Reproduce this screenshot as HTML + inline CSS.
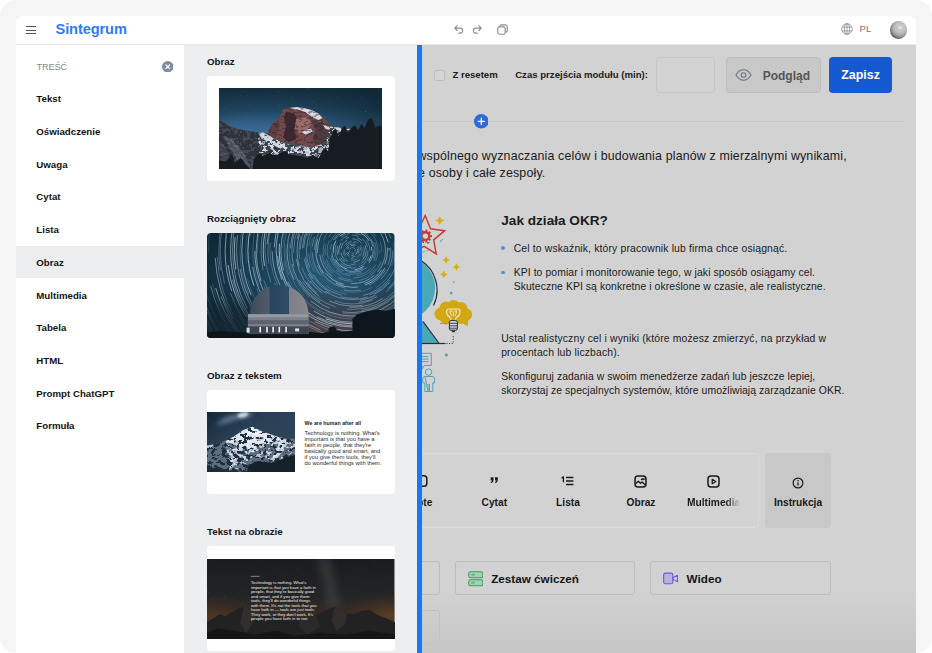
<!DOCTYPE html>
<html lang="pl">
<head>
<meta charset="utf-8">
<title>Sintegrum</title>
<style>
*{box-sizing:border-box;margin:0;padding:0}
html,body{width:932px;height:653px;overflow:hidden;background:#fff}
body{font-family:"Liberation Sans",sans-serif;color:#111;position:relative}
.outer{position:absolute;left:0;top:0;width:932px;height:653px;background:#f5f5f5;border-radius:16px}
.app{position:absolute;left:16px;top:16px;width:900px;height:637px;background:#fff;border-radius:7px 7px 0 0;overflow:hidden}
.abs{position:absolute}
/* header */
.hdr{position:absolute;left:0;top:0;width:900px;height:29px;background:#fff;border-bottom:1px solid #e6e8ec}
.logo{position:absolute;left:39.5px;top:3.5px;font-size:14.6px;font-weight:700;color:#2f7af5;letter-spacing:-0.1px;line-height:18px;white-space:nowrap}
.burger{position:absolute;left:10px;top:10px;width:10px}
.burger i{display:block;height:1px;background:#555;margin-bottom:2.6px}
.pl{position:absolute;left:843.5px;top:6.6px;font-size:9.6px;color:#777;line-height:12px}
.avatar{position:absolute;left:873.5px;top:5px;width:17.5px;height:17.5px;border-radius:50%;background:radial-gradient(circle 12.2px at 60% 37%,#f2f2f2 0,#cdcdcd 16%,#bdbdbd 45%,#a0a0a0 68%,#6a6a6a 88%,#3c3c3c 100%)}
/* sidebar */
.side{position:absolute;left:0;top:29px;width:168px;height:608px;background:#fff}
.side .ttl{position:absolute;left:20.5px;top:15.5px;font-size:9.3px;color:#8b8b8b;line-height:12px;letter-spacing:-0.2px}
.side .cls{position:absolute;left:145.5px;top:15.5px;width:11.5px;height:11.5px}
.mi{position:absolute;left:0;width:168px;height:32.7px;line-height:34.5px;padding-left:20.3px;font-size:9.7px;font-weight:700;color:#141414;white-space:nowrap}
.mi.sel{background:#ecedef}
/* middle */
.mid{position:absolute;left:168px;top:29px;width:233px;height:608px;background:#edeef0}
.mid h4{position:absolute;left:23px;font-size:9.75px;font-weight:700;color:#141414;line-height:12px;white-space:nowrap}
.card{position:absolute;left:23px;width:187.5px;background:#fff;border-radius:4px;overflow:hidden}
.bar{position:absolute;z-index:3;left:401px;top:29px;width:4.7px;height:608px;background:#1578f7}
/* right */
.right{position:absolute;left:405px;top:29px;width:495px;height:608px;background:#d2d2d2;overflow:hidden}

.right .t{position:absolute;white-space:nowrap;color:#1b1b1b}
.cb{position:absolute;left:13px;top:24.5px;width:11.3px;height:11.3px;border:1px solid #bcbcbc;border-radius:2.5px;background:#d6d6d6}
.lbl{font-size:9.6px;font-weight:700;line-height:12px}
.inp{position:absolute;left:235.3px;top:12.2px;width:58.4px;height:35.6px;border:1px solid #c6c6c6;border-radius:4px;background:#d3d3d3}
.btn1{position:absolute;left:305.2px;top:12.2px;width:94.6px;height:35.6px;border:1px solid #bdbdbd;border-radius:4px;background:#c8c8c8}
.btn1 span{position:absolute;left:35.5px;top:10.9px;font-size:12px;font-weight:700;color:#555;line-height:15px}
.btn2{position:absolute;left:407.9px;top:11.8px;width:63.4px;height:36px;border-radius:4px;background:#1559d0}
.btn2 span{position:absolute;left:0;width:100%;text-align:center;top:11.6px;font-size:12.4px;font-weight:700;color:#fff;line-height:15px}
.dots{position:absolute;left:0;top:76px;width:483px;height:0;border-top:1px dotted #bfbfbf}
.plus{position:absolute;left:52.6px;top:69.2px;width:14.6px;height:14.6px}
.p12{font-size:12.4px;line-height:16.5px;color:#222;letter-spacing:.16px}
.h13{font-size:13.6px;font-weight:700;line-height:16px;color:#111}
.p10{font-size:10.4px;line-height:13.9px;color:#222;letter-spacing:.15px}
.dot{position:absolute;margin:-.2px;width:3.8px;height:3.8px;border-radius:50%;background:#5a8fd8}
.tb{position:absolute;left:-20px;top:408px;width:357.6px;height:74.6px;border:1px solid #dbdbdb;border-radius:4px}
.tb2{position:absolute;left:344.3px;top:408.3px;width:66px;height:74.3px;border-radius:4px;background:#c8c8c8}
.tl{position:absolute;font-size:10.2px;font-weight:700;line-height:12px;color:#1a1a1a;white-space:nowrap;transform:translateX(-50%)}
.bb{position:absolute;height:34.4px;width:180.6px;border:1px solid #bdbdbd;border-radius:3px}
.bb span{position:absolute;top:9.300px;font-size:11.7px;font-weight:700;line-height:15px;color:#151515;white-space:nowrap}
.fade{position:absolute;left:0;top:545px;width:495px;height:63px;background:linear-gradient(to bottom,rgba(197,197,197,0),rgba(197,197,197,.55) 55%,rgba(197,197,197,.95))}
</style>
</head>
<body>
<div class="outer"></div>
<div class="app">
  <div class="hdr">
    <div class="burger"><i></i><i></i><i></i></div>
    <div class="logo">Sintegrum</div>

    <svg class="abs" style="left:438.300px;top:9.300px" width="10" height="9" viewBox="0 0 10 9"><path d="M3.200 0.700L0.700 3.100l2.500 2.400M0.900 3.100h5.300a2.500 2.500 0 0 1 0 5H4.700" fill="none" stroke="#8e8e8e" stroke-width="1.150" stroke-linecap="round" stroke-linejoin="round"/></svg>
    <svg class="abs" style="left:455.500px;top:9.300px" width="10" height="9" viewBox="0 0 10 9"><path d="M6.800 0.700L9.300 3.100 6.800 5.500M9.100 3.100H3.800a2.500 2.500 0 0 0 0 5h1.500" fill="none" stroke="#8e8e8e" stroke-width="1.150" stroke-linecap="round" stroke-linejoin="round"/></svg>
    <svg class="abs" style="left:480.500px;top:8.300px" width="11" height="11" viewBox="0 0 11 11"><path d="M2.800 3.300V2.500A1.700 1.700 0 0 1 4.500 0.800h4A1.700 1.700 0 0 1 10.200 2.500v4A1.700 1.700 0 0 1 8.500 8.200H7.700" fill="none" stroke="#8e8e8e" stroke-width="1.150"/><rect x="0.800" y="2.800" width="7.400" height="7.400" rx="1.700" fill="#fff" stroke="#8e8e8e" stroke-width="1.150"/></svg>
    <svg class="abs" style="left:824.500px;top:7.200px" width="12" height="12" viewBox="0 0 12 12"><g fill="none" stroke="#929292" stroke-width="0.850"><circle cx="6" cy="6" r="5.300"/><ellipse cx="6" cy="6" rx="2.700" ry="5.300"/><path d="M6 0.700v10.600M1.200 4.100h9.600M1.200 7.900h9.600"/></g></svg>
    <div class="pl">PL</div>
    <div class="avatar"></div>
  </div>
  <div class="side">
    <div class="ttl">TREŚĆ</div>
    <svg class="cls" viewBox="0 0 12 12"><circle cx="6" cy="6" r="6" fill="#7d8ca3"/><path d="M4 4l4 4M8 4l-4 4" stroke="#fff" stroke-width="1.3" stroke-linecap="round"/></svg>
    <div class="mi" style="top:37.3px">Tekst</div>
    <div class="mi" style="top:70px">Oświadczenie</div>
    <div class="mi" style="top:102.7px">Uwaga</div>
    <div class="mi" style="top:135.4px">Cytat</div>
    <div class="mi" style="top:168.1px">Lista</div>
    <div class="mi sel" style="top:200.8px">Obraz</div>
    <div class="mi" style="top:233.5px">Multimedia</div>
    <div class="mi" style="top:266.2px">Tabela</div>
    <div class="mi" style="top:298.9px">HTML</div>
    <div class="mi" style="top:331.6px">Prompt ChatGPT</div>
    <div class="mi" style="top:364.3px">Formuła</div>
  </div>
  <div class="mid">
    <h4 style="top:10.5px">Obraz</h4>
    <div class="card" id="c1" style="top:31.2px;height:104.5px"><svg class="abs" style="left:12.2px;top:12px" width="163" height="80.500" viewBox="0 0 163 80.500" preserveAspectRatio="none"><defs><linearGradient id="s1" x1="0" y1="0" x2="0" y2="1"><stop offset="0" stop-color="#1a3546"/><stop offset=".28" stop-color="#224c68"/><stop offset=".52" stop-color="#3a6894"/><stop offset="1" stop-color="#4577a8"/></linearGradient><radialGradient id="v1" cx=".28" cy=".62" r=".85"><stop offset=".3" stop-color="#0d2230" stop-opacity="0"/><stop offset="1" stop-color="#0d2230" stop-opacity=".72"/></radialGradient><filter id="b1" x="-5%" y="-5%" width="110%" height="110%"><feGaussianBlur stdDeviation=".45"/></filter><filter id="rk1" x="0" y="0" width="100%" height="100%" color-interpolation-filters="sRGB"><feTurbulence type="fractalNoise" baseFrequency=".22 .3" numOctaves="3" seed="4" result="n"/><feColorMatrix in="n" type="matrix" values="0 0 0 0 .16  0 0 0 0 .18  0 0 0 0 .22  -22 0 0 0 10.500" result="rk"/><feComposite in="rk" in2="SourceGraphic" operator="in"/></filter><filter id="sn1" x="0" y="0" width="100%" height="100%" color-interpolation-filters="sRGB"><feTurbulence type="fractalNoise" baseFrequency=".25 .32" numOctaves="3" seed="9" result="n"/><feColorMatrix in="n" type="matrix" values="0 0 0 0 .84  0 0 0 0 .86  0 0 0 0 .9  22 0 0 0 -11.400" result="rk"/><feComposite in="rk" in2="SourceGraphic" operator="in"/></filter><filter id="dm1" x="0" y="0" width="100%" height="100%" color-interpolation-filters="sRGB"><feTurbulence type="fractalNoise" baseFrequency=".2 .5" numOctaves="3" seed="2" result="n"/><feColorMatrix in="n" type="matrix" values="0 0 0 0 .2  0 0 0 0 .14  0 0 0 0 .16  -14 0 0 0 6.600" result="rk"/><feComposite in="rk" in2="SourceGraphic" operator="in"/></filter></defs><rect width="163" height="80.500" fill="url(#s1)"/><rect width="163" height="80.500" fill="url(#v1)"/><circle cx="52.8" cy="4.5" r="0.28" fill="#cfe0ee" opacity="0.34"/><circle cx="87.3" cy="11.0" r="0.16" fill="#cfe0ee" opacity="0.55"/><circle cx="6.1" cy="13.0" r="0.16" fill="#cfe0ee" opacity="0.35"/><circle cx="69.2" cy="24.8" r="0.17" fill="#cfe0ee" opacity="0.41"/><circle cx="102.3" cy="28.4" r="0.27" fill="#cfe0ee" opacity="0.50"/><circle cx="159.1" cy="1.4" r="0.32" fill="#cfe0ee" opacity="0.44"/><circle cx="23.5" cy="3.5" r="0.21" fill="#cfe0ee" opacity="0.71"/><circle cx="29.5" cy="17.4" r="0.28" fill="#cfe0ee" opacity="0.49"/><circle cx="89.3" cy="1.9" r="0.16" fill="#cfe0ee" opacity="0.40"/><circle cx="110.9" cy="12.8" r="0.21" fill="#cfe0ee" opacity="0.59"/><circle cx="73.9" cy="9.0" r="0.31" fill="#cfe0ee" opacity="0.65"/><circle cx="39.8" cy="17.2" r="0.26" fill="#cfe0ee" opacity="0.74"/><circle cx="118.9" cy="8.6" r="0.35" fill="#cfe0ee" opacity="0.36"/><circle cx="68.2" cy="22.7" r="0.18" fill="#cfe0ee" opacity="0.54"/><circle cx="6.4" cy="20.0" r="0.30" fill="#cfe0ee" opacity="0.59"/><circle cx="142.7" cy="9.4" r="0.29" fill="#cfe0ee" opacity="0.60"/><circle cx="94.5" cy="13.7" r="0.32" fill="#cfe0ee" opacity="0.77"/><circle cx="77.3" cy="19.9" r="0.16" fill="#cfe0ee" opacity="0.65"/><circle cx="105.5" cy="29.8" r="0.31" fill="#cfe0ee" opacity="0.44"/><circle cx="62.9" cy="20.1" r="0.15" fill="#cfe0ee" opacity="0.53"/><circle cx="27.4" cy="3.5" r="0.16" fill="#cfe0ee" opacity="0.68"/><circle cx="21.1" cy="7.4" r="0.23" fill="#cfe0ee" opacity="0.74"/><circle cx="13.1" cy="13.5" r="0.26" fill="#cfe0ee" opacity="0.74"/><circle cx="133.5" cy="25.9" r="0.21" fill="#cfe0ee" opacity="0.51"/><circle cx="58.5" cy="26.5" r="0.34" fill="#cfe0ee" opacity="0.38"/><circle cx="28.7" cy="7.0" r="0.20" fill="#cfe0ee" opacity="0.54"/><circle cx="96.0" cy="7.9" r="0.15" fill="#cfe0ee" opacity="0.51"/><circle cx="60.2" cy="17.0" r="0.34" fill="#cfe0ee" opacity="0.65"/><circle cx="84.0" cy="18.5" r="0.29" fill="#cfe0ee" opacity="0.33"/><circle cx="146.6" cy="23.4" r="0.32" fill="#cfe0ee" opacity="0.70"/><circle cx="64.0" cy="12.0" r="0.17" fill="#cfe0ee" opacity="0.62"/><circle cx="10.1" cy="2.0" r="0.19" fill="#cfe0ee" opacity="0.38"/><circle cx="55.4" cy="1.6" r="0.15" fill="#cfe0ee" opacity="0.38"/><circle cx="16.5" cy="10.9" r="0.16" fill="#cfe0ee" opacity="0.74"/><circle cx="100.1" cy="4.5" r="0.20" fill="#cfe0ee" opacity="0.47"/><circle cx="59.4" cy="3.7" r="0.32" fill="#cfe0ee" opacity="0.80"/><circle cx="76.0" cy="14.5" r="0.17" fill="#cfe0ee" opacity="0.35"/><circle cx="55.8" cy="7.9" r="0.32" fill="#cfe0ee" opacity="0.38"/><circle cx="3.8" cy="28.5" r="0.26" fill="#cfe0ee" opacity="0.37"/><circle cx="88.5" cy="0.8" r="0.26" fill="#cfe0ee" opacity="0.79"/><g filter="url(#b1)"><polygon points="37.5,44.3 48.5,45.4 111.3,36.9 125.1,39.9 136.2,40.2 166.6,42.1 166.6,84.5 32.8,84.5" fill="#474d58"/><polygon points="48.2,45.8 51.3,39.3 55.0,33.8 59.6,31.4 63.3,21.8 69.8,19.9 77.1,19.0 84.5,19.9 91.9,21.8 99.3,25.5 104.8,30.1 111.8,36.9 108.5,51.3 99.3,59.6 84.5,57.8 69.8,55.0 56.8,51.3" fill="#70494d"/><polygon points="67.0,23.6 75.3,25.5 78.1,32.8 75.3,42.1 77.1,51.3 69.8,54.6 64.2,49.5 67.0,38.4 65.1,29.2" fill="#3a2c33"/><polygon points="48.2,45.8 51.3,39.3 55.0,33.8 59.6,31.4 60.9,38.4 57.8,45.8 56.8,51.3" fill="#5e4146"/><polygon points="91.9,32.8 106.7,35.6 111.8,36.9 108.5,51.3 99.3,59.6 93.7,51.3 96.5,42.1" fill="#4f3a41"/><polygon points="77.1,31.0 88.2,29.2 92.8,35.6 88.2,42.1 79.9,45.4 75.7,40.2" fill="#9c6a69"/><polygon points="69.8,19.9 77.1,19.0 84.5,19.9 91.9,21.8 99.3,25.5 103.9,30.6 99.3,31.9 92.8,28.8 86.4,24.0 79.0,21.8" fill="#d5dae2"/><polygon points="38.0,45.0 44.3,44.5 49.8,47.6 56.8,51.7 66.1,55.7 74.4,58.7 73.1,62.7 60.5,60.2 51.3,55.4 44.3,50.9 40.2,48.0" fill="#cfd5de"/><polygon points="103.9,36.9 114.0,39.1 124.2,40.2 123.3,44.3 114.0,42.8 106.7,41.0" fill="#cfd5de"/><polygon points="82.7,43.9 91.9,40.2 93.7,43.6 86.4,46.7" fill="#cfd5de"/><polygon points="75.3,59.6 82.7,56.8 91.9,59.6 99.3,64.2 106.7,56.8 110.4,51.3 112.2,58.7 106.7,69.8 99.3,73.4 88.2,66.1 79.0,65.1" fill="#6f7683"/><polygon points="51.3,59.6 58.7,63.3 69.8,66.1 75.3,69.8 66.1,71.6 55.0,67.0" fill="#8e95a2"/><polygon points="42.1,51.3 51.3,57.8 62.4,62.4 73.4,64.6 75.3,69.8 62.4,68.8 51.3,64.2 43.0,58.7" fill="#3d434e"/><polygon points="51.3,59.6 56.8,60.9 60.5,67.0 55.4,65.7" fill="#c4cad4"/><polygon points="99.3,60.5 106.7,56.8 109.4,59.6 104.8,69.8 100.2,71.6" fill="#aab1bd"/><polygon points="73.4,59.6 82.7,58.3 91.9,60.5 99.3,64.6 91.9,68.3 82.7,66.1 75.3,64.6" fill="#b4bac6"/><polygon points="42.1,51.3 48.5,54.6 46.7,60.5 43.0,57.8" fill="#9aa1ad"/><polygon points="-3.7,31.9 4.2,33.8 9.8,37.5 16.2,40.2 23.6,42.1 32.8,43.6 39.5,44.5 42.4,51.3 41.3,62.4 38.4,69.8 35.1,84.5 -3.7,84.5" fill="#2e333b"/><polygon points="5.2,47.6 12.5,51.3 19.9,58.7 27.3,69.8 33.8,84.5 23.6,84.5 16.2,67.9 8.9,56.8" fill="#5b606a" opacity=".7"/><polygon points="-3.7,51.3 5.2,56.8 10.7,69.8 14.4,84.5 7.0,84.5 1.5,66.1 -3.7,62.4" fill="#454a54" opacity=".7"/></g><polygon filter="url(#sn1)" points="39.5,45.0 49.5,47.6 58.7,52.2 73.4,57.8 91.9,59.6 106.7,55.0 111.3,38.4 125.1,40.6 136.2,41.2 136.2,80.5 39.5,80.5" fill="#000"/><polygon filter="url(#rk1)" points="39.5,45.0 49.5,47.6 58.7,52.2 73.4,57.8 91.9,59.6 106.7,55.0 111.3,38.4 125.1,40.6 136.2,41.2 136.2,80.5 39.5,80.5" fill="#000" opacity=".85"/><polygon filter="url(#dm1)" points="48.2,45.8 51.3,39.3 55.0,33.8 59.6,31.4 63.3,21.8 69.8,19.9 77.1,19.0 84.5,19.9 91.9,21.8 99.3,25.5 104.8,30.1 111.8,36.9 108.5,51.3 99.3,59.6 84.5,57.8 69.8,55.0 56.8,51.3" fill="#000" opacity=".45"/><polygon filter="url(#sn1)" points="-3.7,31.9 4.2,33.8 9.8,37.5 16.2,40.2 23.6,42.1 32.8,43.6 39.5,44.5 42.4,51.3 41.3,62.4 38.4,69.8 35.1,84.5 -3.7,84.5" fill="#000" opacity=".14"/><g filter="url(#b1)"><polygon points="32.8,84.5 35.1,70.7 40.2,64.6 44.3,68.3 49.8,65.3 56.8,67.5 62.7,64.6 66.4,62.7 70.1,66.4 77.1,67.5 82.7,68.3 88.2,70.1 94.1,66.4 96.7,69.0 99.6,70.1 103.3,62.7 106.7,59.1 108.9,64.6 111.3,49.8 114.0,42.4 116.8,40.6 119.6,48.0 123.3,39.5 126.2,37.6 128.8,45.8 132.5,39.5 136.2,37.6 139.0,42.1 142.6,35.8 145.4,40.2 149.1,31.4 152.8,30.3 156.5,39.5 160.2,37.6 166.6,39.5 166.6,84.5" fill="#131b21"/><polygon points="-3.7,84.5 -3.7,71.6 7.0,73.4 12.5,66.1 16.2,75.3 21.8,69.8 27.3,77.1 35.1,84.5" fill="#151c22"/></g></svg></div><!--/c1-->
    <h4 style="top:167.5px">Rozciągnięty obraz</h4>
    <div class="card" id="c2" style="top:188px;height:105px"><svg class="abs" style="left:0;top:0" width="187.5" height="105" viewBox="0 0 187.5 105" preserveAspectRatio="none"><defs><radialGradient id="s2" cx=".66" cy=".45" r=".8"><stop offset="0" stop-color="#295a77"/><stop offset=".45" stop-color="#1a4259"/><stop offset="1" stop-color="#0d2431"/></radialGradient><linearGradient id="h2" x1="0" y1="0" x2="0" y2="1"><stop offset=".5" stop-color="#4a3c44" stop-opacity="0"/><stop offset=".95" stop-color="#4f4246" stop-opacity=".95"/></linearGradient><linearGradient id="d2" x1="0" y1="0" x2="1" y2="0"><stop offset="0" stop-color="#3f4b5a"/><stop offset=".33" stop-color="#4f5b6b"/><stop offset=".34" stop-color="#29445e"/><stop offset=".66" stop-color="#2f4d69"/><stop offset=".67" stop-color="#7d808a"/><stop offset="1" stop-color="#8b878e"/></linearGradient><radialGradient id="l2" cx=".1" cy="1" r=".45" gradientTransform="scale(1 1)"><stop offset="0" stop-color="#13242f" stop-opacity=".95"/><stop offset=".5" stop-color="#13242f" stop-opacity=".7"/><stop offset="1" stop-color="#13242f" stop-opacity="0"/></radialGradient><filter id="b2" x="-5%" y="-5%" width="110%" height="110%"><feGaussianBlur stdDeviation=".3"/></filter></defs><rect width="187.5" height="105" fill="url(#s2)"/><rect x="80" width="107.5" height="105" fill="url(#h2)"/><circle cx="145.5" cy="17.6" r="3.0" fill="none" stroke="#a9d0e8" stroke-width="0.76" stroke-dasharray="2.3 0.9 1.6 0.7 2.5 1.4 2.5 1.0" stroke-dashoffset="15.4" opacity="0.52"/><circle cx="145.5" cy="17.6" r="5.0" fill="none" stroke="#8fc0dd" stroke-width="0.83" stroke-dasharray="2.0 2.2 4.0 3.7 4.2 2.1 2.0 2.5 2.6 3.2" stroke-dashoffset="11.5" opacity="0.80"/><circle cx="145.5" cy="17.6" r="6.5" fill="none" stroke="#e6f2fa" stroke-width="0.75" stroke-dasharray="3.9 2.2 4.0 4.8 4.6 0.8 6.0 2.2 4.8 4.2" stroke-dashoffset="30.4" opacity="0.47"/><circle cx="145.5" cy="17.6" r="8.2" fill="none" stroke="#b9d9ec" stroke-width="0.81" stroke-dasharray="4.7 4.3 2.6 5.9 6.5 3.4 6.6 1.5 3.0 6.1" stroke-dashoffset="41.5" opacity="0.42"/><circle cx="145.5" cy="17.6" r="9.5" fill="none" stroke="#b9d9ec" stroke-width="0.55" stroke-dasharray="9.5 5.1 4.9 4.5 3.3 1.3 9.4 5.1 6.2 6.8 5.5 6.4 8.3 2.5 4.2 3.0" stroke-dashoffset="32.6" opacity="0.53"/><circle cx="145.5" cy="17.6" r="11.7" fill="none" stroke="#b9d9ec" stroke-width="0.63" stroke-dasharray="10.9 4.1 7.0 5.7 10.9 4.5 11.0 5.1" stroke-dashoffset="63.9" opacity="0.69"/><circle cx="145.5" cy="17.6" r="13.7" fill="none" stroke="#cfe6f5" stroke-width="0.60" stroke-dasharray="3.5 8.6 5.2 5.8 10.9 6.5 6.8 6.2 9.2 8.5 4.5 6.6 6.0 4.1 11.4 6.1" stroke-dashoffset="52.8" opacity="0.71"/><circle cx="145.5" cy="17.6" r="15.5" fill="none" stroke="#e6f2fa" stroke-width="0.43" stroke-dasharray="6.2 4.6 9.8 9.8 9.8 4.4 10.0 10.5 14.7 10.9 14.3 3.9 9.1 6.0 8.5 5.0" stroke-dashoffset="65.1" opacity="0.77"/><circle cx="145.5" cy="17.6" r="17.5" fill="none" stroke="#a9d0e8" stroke-width="0.47" stroke-dasharray="16.8 9.3 9.2 5.0 6.2 7.4 14.3 3.2 16.1 4.0" stroke-dashoffset="47.5" opacity="0.77"/><circle cx="145.5" cy="17.6" r="19.3" fill="none" stroke="#a9d0e8" stroke-width="0.84" stroke-dasharray="11.0 6.7 6.2 6.9 9.8 8.0 15.1 7.1 12.4 6.0 18.8 3.8" stroke-dashoffset="12.7" opacity="0.91"/><circle cx="145.5" cy="17.6" r="20.8" fill="none" stroke="#b9d9ec" stroke-width="0.66" stroke-dasharray="19.4 5.0 17.1 13.3 18.5 11.4 20.1 7.9" stroke-dashoffset="91.5" opacity="0.70"/><circle cx="145.5" cy="17.6" r="22.1" fill="none" stroke="#8fc0dd" stroke-width="0.79" stroke-dasharray="18.9 5.3 20.5 6.5 5.8 4.0 9.9 11.2" stroke-dashoffset="63.0" opacity="0.52"/><circle cx="145.5" cy="17.6" r="23.7" fill="none" stroke="#8fc0dd" stroke-width="0.42" stroke-dasharray="13.4 16.6 17.0 3.6 18.6 16.9 23.2 6.9 9.2 16.8 17.2 10.9 9.6 9.6 17.9 7.0" stroke-dashoffset="2.7" opacity="0.84"/><circle cx="145.5" cy="17.6" r="25.4" fill="none" stroke="#a9d0e8" stroke-width="0.55" stroke-dasharray="16.2 7.1 15.0 13.7 18.8 13.7 16.9 17.4 25.0 8.1" stroke-dashoffset="132.9" opacity="0.52"/><circle cx="145.5" cy="17.6" r="27.4" fill="none" stroke="#8fc0dd" stroke-width="0.83" stroke-dasharray="9.8 20.5 27.2 17.9 7.2 14.2 25.1 10.9 8.0 14.9 14.8 12.2 26.9 13.8 21.2 4.2 10.7 8.1" stroke-dashoffset="167.4" opacity="0.40"/><circle cx="145.5" cy="17.6" r="29.2" fill="none" stroke="#cfe6f5" stroke-width="0.46" stroke-dasharray="8.1 19.9 12.1 7.0 14.7 5.2 13.5 15.7 12.8 17.9" stroke-dashoffset="107.7" opacity="0.45"/><circle cx="145.5" cy="17.6" r="30.8" fill="none" stroke="#a9d0e8" stroke-width="0.42" stroke-dasharray="14.8 8.4 21.4 14.1 25.2 16.6 24.4 20.9 16.8 10.2 30.6 6.8" stroke-dashoffset="161.8" opacity="0.80"/><circle cx="145.5" cy="17.6" r="33.0" fill="none" stroke="#cfe6f5" stroke-width="0.68" stroke-dasharray="19.0 18.7 20.9 23.0 27.0 15.9 28.5 4.5 25.4 20.7 26.0 24.0 24.3 5.9 9.3 17.4 32.2 12.0" stroke-dashoffset="129.9" opacity="0.65"/><circle cx="145.5" cy="17.6" r="35.0" fill="none" stroke="#e6f2fa" stroke-width="0.62" stroke-dasharray="15.7 14.4 10.6 24.9 32.5 6.4 22.7 20.8 21.3 22.2 31.1 9.6 28.7 9.5" stroke-dashoffset="84.0" opacity="0.76"/><circle cx="145.5" cy="17.6" r="36.7" fill="none" stroke="#cfe6f5" stroke-width="0.85" stroke-dasharray="17.2 5.7 26.7 9.2 25.8 12.3 27.2 20.6 26.4 7.7 22.6 15.8 36.1 6.9 15.2 15.9 28.8 11.2" stroke-dashoffset="126.6" opacity="0.66"/><circle cx="145.5" cy="17.6" r="38.2" fill="none" stroke="#a9d0e8" stroke-width="0.43" stroke-dasharray="36.6 5.2 22.8 24.5 37.5 15.6 17.4 9.8" stroke-dashoffset="21.7" opacity="0.92"/><circle cx="145.5" cy="17.6" r="40.3" fill="none" stroke="#8fc0dd" stroke-width="0.73" stroke-dasharray="39.0 8.4 35.0 17.9 37.0 22.8 17.1 27.8 24.9 5.7 10.2 17.5" stroke-dashoffset="105.3" opacity="0.65"/><circle cx="145.5" cy="17.6" r="41.9" fill="none" stroke="#8fc0dd" stroke-width="0.43" stroke-dasharray="37.0 5.3 34.2 27.3 14.3 29.6 33.0 29.0" stroke-dashoffset="102.6" opacity="0.56"/><circle cx="145.5" cy="17.6" r="44.0" fill="none" stroke="#8fc0dd" stroke-width="0.60" stroke-dasharray="23.0 17.4 20.2 6.9 14.4 28.6 20.5 31.4" stroke-dashoffset="87.3" opacity="0.54"/><circle cx="145.5" cy="17.6" r="46.1" fill="none" stroke="#a9d0e8" stroke-width="0.48" stroke-dasharray="42.3 29.3 33.5 32.2 44.3 21.7 36.6 7.2 37.0 18.8 37.7 24.4 21.5 7.2" stroke-dashoffset="120.1" opacity="0.91"/><circle cx="145.5" cy="17.6" r="47.6" fill="none" stroke="#8fc0dd" stroke-width="0.85" stroke-dasharray="38.5 35.2 21.3 25.6 22.8 22.6 26.1 11.0 17.8 12.2 44.5 20.8" stroke-dashoffset="134.5" opacity="0.52"/><circle cx="145.5" cy="17.6" r="48.9" fill="none" stroke="#a9d0e8" stroke-width="0.57" stroke-dasharray="21.3 11.5 32.8 16.0 25.9 31.0 19.8 6.8 44.4 17.9" stroke-dashoffset="104.0" opacity="0.81"/><circle cx="145.5" cy="17.6" r="50.2" fill="none" stroke="#cfe6f5" stroke-width="0.46" stroke-dasharray="34.4 17.7 38.6 23.0 42.5 33.1 16.1 34.6 27.2 26.7 29.0 16.2" stroke-dashoffset="134.1" opacity="0.85"/><circle cx="145.5" cy="17.6" r="52.2" fill="none" stroke="#e6f2fa" stroke-width="0.44" stroke-dasharray="51.3 22.6 16.0 37.1 49.7 23.9 31.6 21.3 44.0 13.9 19.1 38.5 17.4 33.7" stroke-dashoffset="255.0" opacity="0.79"/><circle cx="145.5" cy="17.6" r="53.4" fill="none" stroke="#b9d9ec" stroke-width="0.49" stroke-dasharray="22.8 37.6 39.4 16.9 18.6 15.2 39.1 30.2 18.0 9.1" stroke-dashoffset="87.6" opacity="0.69"/><circle cx="145.5" cy="17.6" r="55.5" fill="none" stroke="#e6f2fa" stroke-width="0.72" stroke-dasharray="14.4 17.5 33.2 40.4 40.9 37.8 33.8 15.2" stroke-dashoffset="107.2" opacity="0.54"/><circle cx="145.5" cy="17.6" r="56.7" fill="none" stroke="#e6f2fa" stroke-width="0.84" stroke-dasharray="52.1 30.2 17.7 15.3 32.4 20.3 35.4 31.9 45.0 20.0 31.2 7.4 26.8 37.3" stroke-dashoffset="111.1" opacity="0.44"/><circle cx="145.5" cy="17.6" r="58.8" fill="none" stroke="#e6f2fa" stroke-width="0.42" stroke-dasharray="35.4 17.2 54.2 11.4 42.5 30.0 54.6 25.3 55.2 9.5" stroke-dashoffset="8.7" opacity="0.73"/><circle cx="145.5" cy="17.6" r="60.7" fill="none" stroke="#8fc0dd" stroke-width="0.84" stroke-dasharray="17.6 9.9 33.3 41.9 55.7 35.6 60.9 43.2 30.3 14.7 58.1 36.1 16.7 33.0" stroke-dashoffset="168.7" opacity="0.61"/><circle cx="145.5" cy="17.6" r="62.0" fill="none" stroke="#e6f2fa" stroke-width="0.44" stroke-dasharray="28.7 21.5 60.3 12.6 60.7 15.9 32.3 39.8" stroke-dashoffset="274.8" opacity="0.85"/><circle cx="145.5" cy="17.6" r="63.4" fill="none" stroke="#b9d9ec" stroke-width="0.42" stroke-dasharray="59.9 15.7 33.4 43.7 17.4 24.3 54.8 38.5 17.9 9.4 18.9 44.6 28.2 37.8 58.9 21.5" stroke-dashoffset="297.5" opacity="0.55"/><circle cx="145.5" cy="17.6" r="65.4" fill="none" stroke="#e6f2fa" stroke-width="0.46" stroke-dasharray="31.1 37.9 45.8 41.3 63.1 10.9 57.2 12.6 51.7 27.4 54.7 40.7" stroke-dashoffset="204.0" opacity="0.90"/><circle cx="145.5" cy="17.6" r="66.6" fill="none" stroke="#b9d9ec" stroke-width="0.44" stroke-dasharray="32.0 37.3 24.3 18.3 60.0 27.7 56.1 33.3 42.4 24.8 24.8 25.4 49.4 28.5 44.1 15.1 38.2 12.8" stroke-dashoffset="40.4" opacity="0.44"/><circle cx="145.5" cy="17.6" r="68.4" fill="none" stroke="#b9d9ec" stroke-width="0.48" stroke-dasharray="67.3 16.0 24.0 28.4 63.1 18.7 44.9 41.8 56.3 42.1 32.3 20.6 31.0 19.5 30.6 27.5 26.8 18.7" stroke-dashoffset="27.8" opacity="0.55"/><circle cx="145.5" cy="17.6" r="69.8" fill="none" stroke="#8fc0dd" stroke-width="0.50" stroke-dasharray="44.3 18.9 60.1 37.4 69.7 13.3 42.5 44.7 61.8 48.9" stroke-dashoffset="22.1" opacity="0.42"/><circle cx="145.5" cy="17.6" r="71.7" fill="none" stroke="#a9d0e8" stroke-width="0.77" stroke-dasharray="28.5 12.4 45.7 17.0 50.6 43.9 53.9 9.3 52.5 41.0 36.9 10.7 36.4 11.0 72.1 10.7" stroke-dashoffset="368.8" opacity="0.80"/><circle cx="145.5" cy="17.6" r="73.3" fill="none" stroke="#e6f2fa" stroke-width="0.84" stroke-dasharray="28.7 23.6 29.7 45.9 48.7 12.1 24.0 27.4 48.9 38.7 23.5 16.8" stroke-dashoffset="307.7" opacity="0.78"/><circle cx="145.5" cy="17.6" r="75.0" fill="none" stroke="#a9d0e8" stroke-width="0.82" stroke-dasharray="36.5 36.1 39.0 29.0 67.7 56.4 39.4 18.7" stroke-dashoffset="204.6" opacity="0.80"/><circle cx="145.5" cy="17.6" r="76.4" fill="none" stroke="#cfe6f5" stroke-width="0.66" stroke-dasharray="66.4 29.1 70.0 31.7 28.6 10.3 51.0 40.3" stroke-dashoffset="444.9" opacity="0.90"/><circle cx="145.5" cy="17.6" r="78.4" fill="none" stroke="#e6f2fa" stroke-width="0.54" stroke-dasharray="28.3 23.8 50.5 55.4 26.1 34.0 67.3 57.5 31.4 16.1" stroke-dashoffset="299.3" opacity="0.92"/><circle cx="145.5" cy="17.6" r="80.3" fill="none" stroke="#a9d0e8" stroke-width="0.65" stroke-dasharray="74.9 41.4 70.1 18.2 67.7 21.3 44.7 52.8" stroke-dashoffset="21.0" opacity="0.86"/><circle cx="145.5" cy="17.6" r="82.5" fill="none" stroke="#b9d9ec" stroke-width="0.61" stroke-dasharray="44.6 16.7 36.1 48.0 76.6 12.5 55.7 49.6 23.1 53.8" stroke-dashoffset="440.2" opacity="0.46"/><circle cx="145.5" cy="17.6" r="84.6" fill="none" stroke="#e6f2fa" stroke-width="0.63" stroke-dasharray="48.0 41.6 48.4 45.6 49.7 33.9 22.7 43.5 52.5 23.1 69.9 52.1 50.5 20.2 51.4 16.3 29.4 33.5" stroke-dashoffset="349.2" opacity="0.45"/><circle cx="145.5" cy="17.6" r="85.8" fill="none" stroke="#cfe6f5" stroke-width="0.49" stroke-dasharray="26.9 50.3 71.9 38.4 25.1 38.0 46.0 62.1 30.4 57.0" stroke-dashoffset="529.3" opacity="0.95"/><circle cx="145.5" cy="17.6" r="87.6" fill="none" stroke="#e6f2fa" stroke-width="0.49" stroke-dasharray="67.3 50.7 36.6 56.8 62.3 24.9 43.4 44.8 81.8 36.1" stroke-dashoffset="144.6" opacity="0.54"/><circle cx="145.5" cy="17.6" r="89.3" fill="none" stroke="#e6f2fa" stroke-width="0.65" stroke-dasharray="47.5 22.4 49.6 46.9 41.2 29.6 47.8 55.7 40.2 54.3 25.7 59.4" stroke-dashoffset="325.5" opacity="0.93"/><circle cx="145.5" cy="17.6" r="91.5" fill="none" stroke="#cfe6f5" stroke-width="0.60" stroke-dasharray="40.4 42.3 82.1 53.9 48.6 33.1 48.4 19.9" stroke-dashoffset="101.6" opacity="0.58"/><circle cx="145.5" cy="17.6" r="93.5" fill="none" stroke="#a9d0e8" stroke-width="0.47" stroke-dasharray="44.4 42.1 45.4 68.5 84.9 66.3 86.6 54.8" stroke-dashoffset="361.9" opacity="0.81"/><circle cx="145.5" cy="17.6" r="95.2" fill="none" stroke="#a9d0e8" stroke-width="0.72" stroke-dasharray="50.0 14.8 59.0 48.6 27.2 15.2 64.6 30.1 61.5 43.9 53.6 30.0 33.5 33.9 83.4 21.4" stroke-dashoffset="269.6" opacity="0.41"/><circle cx="145.5" cy="17.6" r="96.4" fill="none" stroke="#e6f2fa" stroke-width="0.51" stroke-dasharray="87.6 59.5 53.5 28.1 25.1 51.2 65.1 33.3 71.2 39.0" stroke-dashoffset="547.5" opacity="0.92"/><circle cx="145.5" cy="17.6" r="97.7" fill="none" stroke="#e6f2fa" stroke-width="0.72" stroke-dasharray="26.4 23.7 36.3 68.2 32.3 49.9 72.9 24.4 55.0 44.1 71.9 52.0 55.1 49.9 62.0 16.2" stroke-dashoffset="3.9" opacity="0.74"/><circle cx="145.5" cy="17.6" r="99.8" fill="none" stroke="#a9d0e8" stroke-width="0.44" stroke-dasharray="93.8 17.6 74.4 23.5 100.1 28.9 73.6 20.3 92.2 70.6 96.1 29.1 29.0 52.4 76.2 55.6 94.1 73.5" stroke-dashoffset="318.3" opacity="0.56"/><circle cx="145.5" cy="17.6" r="101.2" fill="none" stroke="#b9d9ec" stroke-width="0.61" stroke-dasharray="89.7 25.6 37.6 70.9 40.1 37.4 71.3 36.8 90.4 71.3" stroke-dashoffset="534.0" opacity="0.94"/><circle cx="145.5" cy="17.6" r="103.2" fill="none" stroke="#cfe6f5" stroke-width="0.45" stroke-dasharray="59.9 59.9 70.3 32.9 42.4 53.3 32.0 72.0" stroke-dashoffset="403.2" opacity="0.48"/><circle cx="145.5" cy="17.6" r="104.6" fill="none" stroke="#b9d9ec" stroke-width="0.80" stroke-dasharray="81.5 15.2 37.2 55.4 29.6 17.6 30.0 69.4 86.3 26.2" stroke-dashoffset="43.3" opacity="0.93"/><circle cx="145.5" cy="17.6" r="106.7" fill="none" stroke="#8fc0dd" stroke-width="0.42" stroke-dasharray="102.8 20.6 43.4 20.9 29.6 70.2 92.2 55.9 93.2 55.8 49.9 20.1 34.7 64.2 43.3 34.8 60.9 14.8" stroke-dashoffset="509.5" opacity="0.54"/><circle cx="145.5" cy="17.6" r="108.9" fill="none" stroke="#cfe6f5" stroke-width="0.40" stroke-dasharray="68.7 71.9 78.1 15.8 61.3 43.6 90.9 37.4 85.2 50.5 45.2 72.7 34.8 69.8 41.4 13.8" stroke-dashoffset="335.9" opacity="0.51"/><circle cx="145.5" cy="17.6" r="110.7" fill="none" stroke="#cfe6f5" stroke-width="0.62" stroke-dasharray="108.5 55.1 107.7 49.7 76.0 25.0 95.8 79.1 47.1 25.4" stroke-dashoffset="689.1" opacity="0.92"/><circle cx="145.5" cy="17.6" r="112.5" fill="none" stroke="#8fc0dd" stroke-width="0.59" stroke-dasharray="81.5 39.3 62.3 42.0 103.8 20.2 103.6 15.9" stroke-dashoffset="385.1" opacity="0.51"/><circle cx="145.5" cy="17.6" r="113.9" fill="none" stroke="#a9d0e8" stroke-width="0.63" stroke-dasharray="48.7 47.3 74.2 68.3 93.3 60.5 58.5 37.7 42.0 74.6 85.5 67.4 43.2 45.7 95.0 55.7 39.4 47.4" stroke-dashoffset="191.4" opacity="0.89"/><circle cx="145.5" cy="17.6" r="115.9" fill="none" stroke="#e6f2fa" stroke-width="0.52" stroke-dasharray="42.6 25.9 50.8 38.3 74.8 26.3 57.8 28.3 114.3 67.6 38.0 84.6 38.0 42.5 115.1 72.4" stroke-dashoffset="79.6" opacity="0.80"/><circle cx="145.5" cy="17.6" r="118.1" fill="none" stroke="#e6f2fa" stroke-width="0.72" stroke-dasharray="48.1 43.7 32.7 44.4 100.1 66.3 74.2 61.8 70.9 25.4 83.4 44.9" stroke-dashoffset="435.9" opacity="0.81"/><circle cx="145.5" cy="17.6" r="120.0" fill="none" stroke="#e6f2fa" stroke-width="0.51" stroke-dasharray="90.6 64.3 109.6 63.5 83.0 32.3 46.6 24.4 69.3 34.7" stroke-dashoffset="301.7" opacity="0.79"/><circle cx="145.5" cy="17.6" r="122.0" fill="none" stroke="#e6f2fa" stroke-width="0.81" stroke-dasharray="53.7 47.8 72.5 63.0 68.3 67.1 116.2 29.4 90.9 75.0" stroke-dashoffset="81.5" opacity="0.61"/><circle cx="145.5" cy="17.6" r="123.5" fill="none" stroke="#b9d9ec" stroke-width="0.55" stroke-dasharray="46.0 76.2 118.6 55.8 40.4 60.1 81.4 71.2 78.7 65.1" stroke-dashoffset="575.7" opacity="0.86"/><circle cx="145.5" cy="17.6" r="125.2" fill="none" stroke="#e6f2fa" stroke-width="0.61" stroke-dasharray="48.8 56.1 119.5 73.1 89.4 65.9 55.3 45.8 37.3 21.6 117.8 65.2 95.1 61.4 41.8 39.6 69.3 90.7" stroke-dashoffset="129.4" opacity="0.93"/><circle cx="145.5" cy="17.6" r="127.4" fill="none" stroke="#e6f2fa" stroke-width="0.61" stroke-dasharray="109.8 66.8 77.1 61.0 53.7 93.2 65.9 67.1" stroke-dashoffset="235.6" opacity="0.85"/><circle cx="145.5" cy="17.6" r="129.2" fill="none" stroke="#8fc0dd" stroke-width="0.51" stroke-dasharray="108.4 54.3 108.8 34.9 101.1 72.0 128.2 71.3 79.4 81.6" stroke-dashoffset="245.0" opacity="0.84"/><circle cx="145.5" cy="17.6" r="130.9" fill="none" stroke="#cfe6f5" stroke-width="0.70" stroke-dasharray="94.4 23.5 121.4 29.0 62.8 48.1 41.3 62.9 65.0 94.0 85.3 44.8 90.4 70.5" stroke-dashoffset="205.7" opacity="0.52"/><circle cx="145.5" cy="17.6" r="132.2" fill="none" stroke="#b9d9ec" stroke-width="0.75" stroke-dasharray="118.4 32.0 78.3 81.8 54.0 50.1 86.5 67.3 101.8 97.8" stroke-dashoffset="696.9" opacity="0.45"/><circle cx="145.5" cy="17.6" r="133.6" fill="none" stroke="#b9d9ec" stroke-width="0.62" stroke-dasharray="55.1 23.4 118.2 73.2 45.4 26.7 75.8 86.2 81.3 63.6 82.4 92.8 104.2 37.5 50.2 67.1 107.6 30.3" stroke-dashoffset="249.2" opacity="0.58"/><circle cx="145.5" cy="17.6" r="135.4" fill="none" stroke="#e6f2fa" stroke-width="0.68" stroke-dasharray="76.8 98.7 41.7 71.2 98.9 19.4 96.2 75.1 129.1 45.1 134.2 60.4 83.5 93.3" stroke-dashoffset="288.0" opacity="0.42"/><circle cx="145.5" cy="17.6" r="137.5" fill="none" stroke="#b9d9ec" stroke-width="0.56" stroke-dasharray="69.9 84.5 92.0 96.1 64.0 46.8 60.6 21.8 64.5 48.0 85.7 46.1" stroke-dashoffset="175.8" opacity="0.94"/><circle cx="145.5" cy="17.6" r="139.2" fill="none" stroke="#b9d9ec" stroke-width="0.66" stroke-dasharray="69.7 45.2 66.4 68.8 101.6 86.1 39.2 80.7" stroke-dashoffset="348.6" opacity="0.89"/><circle cx="145.5" cy="17.6" r="140.6" fill="none" stroke="#b9d9ec" stroke-width="0.79" stroke-dasharray="55.5 99.0 99.8 75.8 119.0 98.0 100.2 72.1" stroke-dashoffset="73.3" opacity="0.74"/><circle cx="145.5" cy="17.6" r="141.8" fill="none" stroke="#cfe6f5" stroke-width="0.62" stroke-dasharray="84.6 85.8 46.5 34.0 39.6 86.8 133.4 76.2 75.1 91.1 119.7 67.9 63.2 44.7 80.7 46.2 81.7 75.0" stroke-dashoffset="465.3" opacity="0.91"/><circle cx="145.5" cy="17.6" r="143.9" fill="none" stroke="#cfe6f5" stroke-width="0.40" stroke-dasharray="98.6 101.2 84.6 19.4 78.2 71.6 137.9 106.8 87.8 55.4 47.2 76.4 59.2 31.8" stroke-dashoffset="605.3" opacity="0.41"/><circle cx="145.5" cy="17.6" r="146.2" fill="none" stroke="#a9d0e8" stroke-width="0.73" stroke-dasharray="60.8 29.5 88.8 43.7 99.5 59.8 118.8 103.1" stroke-dashoffset="77.4" opacity="0.60"/><circle cx="145.5" cy="17.6" r="148.1" fill="none" stroke="#e6f2fa" stroke-width="0.70" stroke-dasharray="92.8 80.9 136.6 103.6 43.1 21.6 44.0 100.8 113.9 76.1 80.7 47.7 104.2 107.7 130.4 75.3 72.5 106.9" stroke-dashoffset="134.8" opacity="0.80"/><circle cx="145.5" cy="17.6" r="150.2" fill="none" stroke="#b9d9ec" stroke-width="0.55" stroke-dasharray="145.7 34.3 128.5 63.9 125.8 61.6 68.5 90.1 75.5 45.3 108.2 80.3" stroke-dashoffset="571.6" opacity="0.84"/><circle cx="145.5" cy="17.6" r="152.4" fill="none" stroke="#8fc0dd" stroke-width="0.52" stroke-dasharray="107.4 48.7 87.6 104.2 81.6 84.8 107.5 105.0 131.1 46.3" stroke-dashoffset="150.7" opacity="0.40"/><circle cx="145.5" cy="17.6" r="154.7" fill="none" stroke="#e6f2fa" stroke-width="0.56" stroke-dasharray="72.5 33.1 142.7 115.9 56.0 114.2 131.8 72.7" stroke-dashoffset="82.7" opacity="0.83"/><circle cx="145.5" cy="17.6" r="156.5" fill="none" stroke="#a9d0e8" stroke-width="0.58" stroke-dasharray="63.0 93.4 149.2 42.7 110.9 86.3 94.2 40.0 69.4 93.5 132.7 64.9 49.7 99.0" stroke-dashoffset="512.3" opacity="0.82"/><circle cx="145.5" cy="17.6" r="158.0" fill="none" stroke="#cfe6f5" stroke-width="0.47" stroke-dasharray="77.9 70.1 63.7 41.0 50.7 99.8 74.2 77.2 82.4 97.2 141.8 44.3 149.6 68.8 142.9 56.7" stroke-dashoffset="592.7" opacity="0.65"/><circle cx="145.5" cy="17.6" r="159.5" fill="none" stroke="#e6f2fa" stroke-width="0.44" stroke-dasharray="113.1 29.5 64.7 107.3 108.1 78.9 65.8 112.8 73.8 29.8 93.8 79.5 113.3 33.2 141.6 54.0" stroke-dashoffset="51.1" opacity="0.95"/><circle cx="145.5" cy="17.6" r="161.3" fill="none" stroke="#cfe6f5" stroke-width="0.82" stroke-dasharray="96.3 116.3 151.2 26.8 113.3 60.6 55.1 117.5 71.8 77.5 118.5 117.2 122.0 60.1 95.1 36.5 158.0 120.8" stroke-dashoffset="954.1" opacity="0.52"/><circle cx="145.5" cy="17.6" r="162.6" fill="none" stroke="#8fc0dd" stroke-width="0.58" stroke-dasharray="151.8 106.0 46.6 100.8 127.9 86.5 161.7 26.1 58.6 97.6 156.0 89.6 77.5 80.9 133.8 31.2" stroke-dashoffset="383.1" opacity="0.58"/><circle cx="145.5" cy="17.6" r="164.2" fill="none" stroke="#e6f2fa" stroke-width="0.78" stroke-dasharray="70.8 35.4 125.2 21.9 130.1 40.8 45.7 116.4 68.6 117.0 148.6 112.3 58.6 66.8" stroke-dashoffset="648.4" opacity="0.45"/><circle cx="145.5" cy="17.6" r="165.9" fill="none" stroke="#cfe6f5" stroke-width="0.52" stroke-dasharray="82.1 45.2 56.2 59.0 83.2 97.6 64.3 67.9 153.0 66.6 60.4 64.5" stroke-dashoffset="875.3" opacity="0.54"/><circle cx="145.5" cy="17.6" r="167.5" fill="none" stroke="#cfe6f5" stroke-width="0.52" stroke-dasharray="75.0 32.5 99.7 71.8 61.5 75.1 121.8 103.9 158.9 80.0" stroke-dashoffset="212.2" opacity="0.86"/><circle cx="145.5" cy="17.6" r="169.1" fill="none" stroke="#cfe6f5" stroke-width="0.76" stroke-dasharray="169.8 119.5 54.9 52.0 156.8 27.4 135.1 52.4 167.3 23.0 145.4 57.5" stroke-dashoffset="1002.6" opacity="0.48"/><circle cx="145.5" cy="17.6" r="170.6" fill="none" stroke="#8fc0dd" stroke-width="0.48" stroke-dasharray="98.9 119.2 71.0 82.7 60.6 40.7 142.0 97.7 68.2 29.9 54.1 86.7" stroke-dashoffset="146.9" opacity="0.67"/><circle cx="145.5" cy="17.6" r="172.5" fill="none" stroke="#8fc0dd" stroke-width="0.42" stroke-dasharray="149.0 84.9 69.7 28.8 138.7 65.9 137.3 27.7 148.8 58.0 152.9 115.4 107.5 23.4 161.8 73.4 156.8 50.5" stroke-dashoffset="761.4" opacity="0.50"/><circle cx="145.5" cy="17.6" r="174.4" fill="none" stroke="#e6f2fa" stroke-width="0.66" stroke-dasharray="90.7 124.0 171.2 29.7 90.7 48.7 153.0 121.9" stroke-dashoffset="984.0" opacity="0.83"/><circle cx="145.5" cy="17.6" r="175.9" fill="none" stroke="#cfe6f5" stroke-width="0.54" stroke-dasharray="170.7 76.8 112.3 80.7 115.5 24.4 172.5 46.8" stroke-dashoffset="613.8" opacity="0.50"/><circle cx="145.5" cy="17.6" r="178.2" fill="none" stroke="#cfe6f5" stroke-width="0.72" stroke-dasharray="57.7 100.6 71.0 24.4 125.3 86.9 115.0 101.0" stroke-dashoffset="50.6" opacity="0.46"/><circle cx="145.5" cy="17.6" r="179.5" fill="none" stroke="#b9d9ec" stroke-width="0.78" stroke-dasharray="124.4 108.4 60.0 36.3 164.8 83.6 75.9 48.2 135.6 74.7 98.8 129.5 47.6 94.2" stroke-dashoffset="592.8" opacity="0.78"/><circle cx="145.5" cy="17.6" r="181.1" fill="none" stroke="#b9d9ec" stroke-width="0.42" stroke-dasharray="151.6 61.3 78.3 60.9 105.0 134.4 155.4 126.6" stroke-dashoffset="588.8" opacity="0.85"/><circle cx="145.5" cy="17.6" r="183.4" fill="none" stroke="#cfe6f5" stroke-width="0.76" stroke-dasharray="80.6 71.7 133.6 65.0 119.5 31.0 106.0 81.2 49.0 39.1 180.2 112.5" stroke-dashoffset="1019.0" opacity="0.92"/><circle cx="145.5" cy="17.6" r="185.6" fill="none" stroke="#cfe6f5" stroke-width="0.60" stroke-dasharray="167.7 95.7 175.1 96.0 134.5 117.3 51.6 35.0" stroke-dashoffset="1108.6" opacity="0.47"/><circle cx="145.5" cy="17.6" r="187.1" fill="none" stroke="#b9d9ec" stroke-width="0.53" stroke-dasharray="96.0 43.1 55.5 136.2 176.9 129.5 58.9 92.9 178.5 75.2 119.2 127.6" stroke-dashoffset="286.1" opacity="0.90"/><circle cx="145.5" cy="17.6" r="188.4" fill="none" stroke="#8fc0dd" stroke-width="0.47" stroke-dasharray="88.1 77.4 146.0 49.9 102.3 88.6 99.4 129.2 90.5 80.2 163.6 27.3 94.7 46.0 124.9 138.4" stroke-dashoffset="1126.8" opacity="0.62"/><circle cx="145.5" cy="17.6" r="189.9" fill="none" stroke="#cfe6f5" stroke-width="0.63" stroke-dasharray="118.1 57.9 189.1 59.1 158.3 42.8 57.3 127.8 110.7 31.3 103.3 76.4" stroke-dashoffset="1180.5" opacity="0.80"/><rect x="0" y="0" width="187.5" height="105" fill="url(#l2)"/><g filter="url(#b2)"><polygon points="-4.9,110.6 -4.9,99.8 11.0,98.3 20.8,98.6 28.1,99.3 40.4,99.3 101.5,98.8 116.2,100.3 126.0,97.1 135.8,98.8 145.5,97.8 145.5,86.1 150.4,81.2 160.2,78.3 170.0,76.8 179.8,77.8 192.0,74.9 192.0,110.6" fill="#0f151a"/><ellipse cx="125.5" cy="96.4" rx="4" ry="2.600" fill="#12181d"/><path d="M27.6 81.7L23.2 98.3" stroke="#1a2a36" stroke-width=".9"/><path d="M42.9 81.2A29.3 29.3 0 0 1 101.5 81.2Z" fill="url(#d2)"/><rect x="40.9" y="81.2" width="60.7" height="20.1" fill="#7b808b"/><rect x="40.9" y="81.2" width="60.7" height="3" fill="#9398a2"/><rect x="40.9" y="87.2" width="60.7" height="4" fill="#5d626c"/><rect x="40.9" y="93.4" width="60.7" height="7.8" fill="#3f4550"/><rect x="52.4" y="93.9" width="1.600" height="5.500" fill="#f2f4f8"/><rect x="59.2" y="93.9" width="1.600" height="5.500" fill="#f2f4f8"/><rect x="65.3" y="93.9" width="1.600" height="5.500" fill="#f2f4f8"/><rect x="71.5" y="93.9" width="1.600" height="5.500" fill="#f2f4f8"/><rect x="78.3" y="93.9" width="1.600" height="5.500" fill="#f2f4f8"/><rect x="39.6" y="94.7" width="3" height="5" fill="#cfe6f7"/><rect x="88.1" y="95.4" width="4" height="3" fill="#cfe6f7"/><rect x="0" y="101.3" width="187.5" height="5" fill="#0f151a"/></g></svg></div><!--/c2-->
    <h4 style="top:324.5px">Obraz z tekstem</h4>
    <div class="card" id="c3" style="top:344.8px;height:104.2px"><svg class="abs" style="left:0;top:22.400px" width="88.3" height="59.4" viewBox="0 0 88.3 59.4" preserveAspectRatio="none"><defs><linearGradient id="s3" x1="0" y1="0" x2="1" y2="1"><stop offset="0" stop-color="#17283a"/><stop offset=".35" stop-color="#293f54"/><stop offset="1" stop-color="#2f4a60"/></linearGradient><filter id="b3" x="-5%" y="-5%" width="110%" height="110%"><feGaussianBlur stdDeviation=".45"/></filter><filter id="b3c" x="-30%" y="-30%" width="160%" height="160%"><feGaussianBlur stdDeviation="2.200"/></filter><filter id="b3d" x="-30%" y="-30%" width="160%" height="160%"><feGaussianBlur stdDeviation="1.200"/></filter><filter id="rk3" x="0" y="0" width="100%" height="100%" color-interpolation-filters="sRGB"><feTurbulence type="fractalNoise" baseFrequency=".2 .28" numOctaves="3" seed="5" result="n"/><feColorMatrix in="n" type="matrix" values="0 0 0 0 .12  0 0 0 0 .18  0 0 0 0 .25  -22 0 0 0 10.700" result="rk"/><feComposite in="rk" in2="SourceGraphic" operator="in"/></filter><filter id="rk3b" x="0" y="0" width="100%" height="100%" color-interpolation-filters="sRGB"><feTurbulence type="fractalNoise" baseFrequency=".22 .3" numOctaves="3" seed="11" result="n"/><feColorMatrix in="n" type="matrix" values="0 0 0 0 .9  0 0 0 0 .93  0 0 0 0 .96  11 0 0 0 -5.900" result="rk"/><feComposite in="rk" in2="SourceGraphic" operator="in"/></filter></defs><rect width="88.3" height="59.4" fill="url(#s3)"/><polygon filter="url(#b3c)" points="8.3,13.3 16.7,6.0 29.2,1.9 41.7,0.0 46.9,1.9 39.6,6.0 29.2,8.1 18.8,11.2" fill="#6f8ba3" opacity=".75"/><ellipse filter="url(#b3d)" cx="35.9" cy="2.9" rx="5.500" ry="2.600" fill="#dce7f1" opacity=".85" transform="rotate(-12 36 3)"/><g filter="url(#b3)"><polygon points="-3.1,34.0 0.0,33.6 7.3,32.3 13.5,30.8 21.9,26.7 29.2,22.9 36.5,17.9 45.3,14.8 54.2,19.0 62.5,21.7 70.8,24.8 79.2,26.5 91.7,27.1 91.7,62.3 -3.1,62.3" fill="#5b6e7e"/><polygon points="45.3,14.8 36.5,17.9 29.2,22.9 22.9,26.7 18.8,30.0 25.0,31.6 29.2,31.0 33.3,35.7 38.5,33.1 41.7,39.4 46.9,40.4 51.0,33.1 55.2,31.6 61.5,32.1 67.7,29.5 75.0,27.7 70.8,25.0 62.5,21.9 54.2,19.1" fill="#dfe6ee"/><polygon points="39.6,18.0 45.3,15.4 52.1,19.1 56.2,22.7 50.0,23.8 44.8,21.7 41.7,22.7" fill="#f0f4f9"/><polygon points="72.9,27.9 79.2,26.9 78.1,33.1 74.0,41.5 68.8,47.7 63.5,48.8 68.8,39.4" fill="#cfd9e3"/><polygon points="22.9,39.4 29.2,35.2 33.3,37.3 32.3,44.6 27.1,54.0 21.9,58.1 24.0,47.7" fill="#b5c2ce"/><polygon points="0.0,33.6 7.3,32.3 4.2,35.7 0.0,36.8" fill="#b7c4d0"/></g><polygon filter="url(#rk3)" points="-3.1,34.0 0.0,33.6 7.3,32.3 13.5,30.8 21.9,26.7 29.2,22.9 36.5,17.9 45.3,14.8 54.2,19.0 62.5,21.7 70.8,24.8 79.2,26.5 91.7,27.1 91.7,62.3 -3.1,62.3" fill="#000"/><polygon filter="url(#rk3b)" points="18.8,29.0 21.9,26.9 29.2,23.1 36.5,18.1 45.3,15.0 54.2,19.2 62.5,21.9 70.8,25.0 79.2,26.7 89.6,27.3 87.5,39.4 70.8,49.8 50.0,44.6 29.2,58.1 20.8,45.6" fill="#000" opacity=".8"/><g filter="url(#b3)"><polygon points="37.5,64.4 41.7,54.0 47.9,49.8 56.2,49.8 64.6,50.8 72.9,47.7 81.2,44.6 91.7,42.5 91.7,64.4" fill="#14212b"/><polygon points="-3.1,64.4 -3.1,54.0 4.2,56.0 12.5,55.0 20.8,59.2 29.2,57.1 37.5,64.4" fill="#1f2d39"/></g></svg><div class="abs" style="left:97.600px;top:30.700px;font-size:5.300px;font-weight:700;line-height:6px;color:#222;white-space:nowrap">We are human after all</div><div class="abs" style="left:97.600px;top:40.200px;font-size:5.700px;line-height:6px;color:#2b2b2b;white-space:nowrap">Technology is nothing. What's<br>important is that you have a<br>faith in people, that they're<br>basically good and smart, and<br>if you give them tools, they'll<br>do wonderful things with them.</div></div><!--/c3-->
    <h4 style="top:480.5px">Tekst na obrazie</h4>
    <div class="card" id="c4" style="top:501.2px;height:104.4px;border-radius:3px"><svg class="abs" style="left:0;top:12.600px" width="187.5" height="80.2" viewBox="0 0 187.5 80.2" preserveAspectRatio="none"><defs><linearGradient id="s4" x1="0" y1="0" x2="0" y2="1"><stop offset="0" stop-color="#1a1c1f"/><stop offset=".45" stop-color="#222426"/><stop offset=".72" stop-color="#3b2d24"/><stop offset="1" stop-color="#3b2d24"/></linearGradient><radialGradient id="g4" cx=".02" cy=".72" r=".3"><stop offset="0" stop-color="#5e3f26" stop-opacity=".6"/><stop offset="1" stop-color="#3a2a20" stop-opacity="0"/></radialGradient><radialGradient id="g5" cx=".98" cy=".7" r=".32"><stop offset="0" stop-color="#6e4a28" stop-opacity=".65"/><stop offset="1" stop-color="#3a2a20" stop-opacity="0"/></radialGradient><filter id="b4" x="-5%" y="-5%" width="110%" height="110%"><feGaussianBlur stdDeviation=".5"/></filter><filter id="b4m" x="-30%" y="-30%" width="160%" height="160%"><feGaussianBlur stdDeviation="5"/></filter></defs><rect width="187.5" height="80.2" fill="url(#s4)"/><rect width="187.5" height="80.2" fill="url(#g4)"/><rect width="187.5" height="80.2" fill="url(#g5)"/><polygon filter="url(#b4m)" points="109.2,-2.5 121.5,-2.5 126.7,20.2 132.9,49.0 121.5,51.1 117.4,24.3" fill="#5c6067" opacity=".38"/><circle cx="175.1" cy="18.8" r="0.24" fill="#d8d8d8" opacity="0.26"/><circle cx="38.0" cy="27.5" r="0.17" fill="#d8d8d8" opacity="0.54"/><circle cx="17.8" cy="38.5" r="0.29" fill="#d8d8d8" opacity="0.60"/><circle cx="50.4" cy="28.4" r="0.23" fill="#d8d8d8" opacity="0.48"/><circle cx="77.4" cy="4.7" r="0.19" fill="#d8d8d8" opacity="0.42"/><circle cx="22.0" cy="17.9" r="0.30" fill="#d8d8d8" opacity="0.26"/><circle cx="159.4" cy="12.6" r="0.23" fill="#d8d8d8" opacity="0.24"/><circle cx="159.7" cy="31.2" r="0.17" fill="#d8d8d8" opacity="0.34"/><circle cx="66.2" cy="23.7" r="0.23" fill="#d8d8d8" opacity="0.46"/><circle cx="1.3" cy="33.6" r="0.30" fill="#d8d8d8" opacity="0.35"/><circle cx="56.3" cy="24.2" r="0.26" fill="#d8d8d8" opacity="0.37"/><circle cx="70.7" cy="10.4" r="0.27" fill="#d8d8d8" opacity="0.33"/><circle cx="181.7" cy="27.4" r="0.16" fill="#d8d8d8" opacity="0.33"/><circle cx="182.3" cy="40.1" r="0.29" fill="#d8d8d8" opacity="0.21"/><circle cx="48.1" cy="40.3" r="0.17" fill="#d8d8d8" opacity="0.41"/><circle cx="58.6" cy="27.9" r="0.20" fill="#d8d8d8" opacity="0.53"/><circle cx="136.3" cy="19.4" r="0.20" fill="#d8d8d8" opacity="0.22"/><circle cx="126.8" cy="20.4" r="0.12" fill="#d8d8d8" opacity="0.23"/><circle cx="43.0" cy="18.4" r="0.21" fill="#d8d8d8" opacity="0.46"/><circle cx="174.1" cy="6.9" r="0.15" fill="#d8d8d8" opacity="0.37"/><circle cx="75.3" cy="34.5" r="0.28" fill="#d8d8d8" opacity="0.43"/><circle cx="129.7" cy="33.6" r="0.14" fill="#d8d8d8" opacity="0.35"/><circle cx="68.7" cy="3.4" r="0.18" fill="#d8d8d8" opacity="0.27"/><circle cx="123.0" cy="13.3" r="0.18" fill="#d8d8d8" opacity="0.57"/><circle cx="95.4" cy="43.7" r="0.23" fill="#d8d8d8" opacity="0.41"/><circle cx="153.0" cy="9.4" r="0.28" fill="#d8d8d8" opacity="0.36"/><circle cx="11.3" cy="25.4" r="0.14" fill="#d8d8d8" opacity="0.43"/><circle cx="118.4" cy="32.5" r="0.24" fill="#d8d8d8" opacity="0.20"/><circle cx="0.5" cy="32.0" r="0.22" fill="#d8d8d8" opacity="0.57"/><circle cx="74.5" cy="4.4" r="0.12" fill="#d8d8d8" opacity="0.21"/><circle cx="32.8" cy="34.6" r="0.22" fill="#d8d8d8" opacity="0.55"/><circle cx="167.9" cy="23.1" r="0.15" fill="#d8d8d8" opacity="0.28"/><circle cx="112.8" cy="6.5" r="0.21" fill="#d8d8d8" opacity="0.40"/><circle cx="5.4" cy="3.4" r="0.29" fill="#d8d8d8" opacity="0.40"/><circle cx="87.7" cy="19.4" r="0.26" fill="#d8d8d8" opacity="0.46"/><circle cx="128.4" cy="26.0" r="0.15" fill="#d8d8d8" opacity="0.30"/><circle cx="51.6" cy="1.5" r="0.23" fill="#d8d8d8" opacity="0.54"/><circle cx="177.7" cy="2.8" r="0.15" fill="#d8d8d8" opacity="0.45"/><circle cx="3.7" cy="9.9" r="0.19" fill="#d8d8d8" opacity="0.51"/><circle cx="8.2" cy="2.5" r="0.16" fill="#d8d8d8" opacity="0.29"/><circle cx="29.9" cy="26.4" r="0.15" fill="#d8d8d8" opacity="0.20"/><circle cx="162.6" cy="20.5" r="0.20" fill="#d8d8d8" opacity="0.30"/><circle cx="166.3" cy="44.1" r="0.13" fill="#d8d8d8" opacity="0.47"/><circle cx="126.5" cy="26.3" r="0.19" fill="#d8d8d8" opacity="0.36"/><circle cx="133.5" cy="1.0" r="0.28" fill="#d8d8d8" opacity="0.23"/><circle cx="31.9" cy="17.1" r="0.12" fill="#d8d8d8" opacity="0.55"/><circle cx="74.3" cy="16.3" r="0.18" fill="#d8d8d8" opacity="0.55"/><circle cx="63.0" cy="29.3" r="0.29" fill="#d8d8d8" opacity="0.37"/><circle cx="171.2" cy="24.9" r="0.19" fill="#d8d8d8" opacity="0.39"/><circle cx="64.6" cy="19.6" r="0.17" fill="#d8d8d8" opacity="0.21"/><circle cx="150.9" cy="10.9" r="0.14" fill="#d8d8d8" opacity="0.28"/><circle cx="102.2" cy="35.4" r="0.22" fill="#d8d8d8" opacity="0.39"/><circle cx="149.1" cy="10.8" r="0.19" fill="#d8d8d8" opacity="0.29"/><circle cx="76.0" cy="28.3" r="0.22" fill="#d8d8d8" opacity="0.32"/><circle cx="89.2" cy="9.2" r="0.27" fill="#d8d8d8" opacity="0.47"/><circle cx="176.6" cy="44.9" r="0.23" fill="#d8d8d8" opacity="0.38"/><circle cx="185.6" cy="24.1" r="0.19" fill="#d8d8d8" opacity="0.40"/><circle cx="23.5" cy="33.8" r="0.24" fill="#d8d8d8" opacity="0.24"/><circle cx="159.7" cy="33.1" r="0.26" fill="#d8d8d8" opacity="0.21"/><circle cx="134.7" cy="6.5" r="0.12" fill="#d8d8d8" opacity="0.48"/><circle cx="130.2" cy="34.9" r="0.16" fill="#d8d8d8" opacity="0.28"/><circle cx="167.1" cy="3.1" r="0.28" fill="#d8d8d8" opacity="0.52"/><circle cx="142.2" cy="8.7" r="0.25" fill="#d8d8d8" opacity="0.24"/><circle cx="54.1" cy="36.8" r="0.19" fill="#d8d8d8" opacity="0.34"/><circle cx="158.3" cy="20.9" r="0.23" fill="#d8d8d8" opacity="0.45"/><circle cx="161.8" cy="42.2" r="0.15" fill="#d8d8d8" opacity="0.35"/><circle cx="149.9" cy="31.1" r="0.28" fill="#d8d8d8" opacity="0.21"/><circle cx="132.0" cy="20.8" r="0.30" fill="#d8d8d8" opacity="0.36"/><circle cx="169.9" cy="4.4" r="0.17" fill="#d8d8d8" opacity="0.31"/><circle cx="114.2" cy="9.9" r="0.24" fill="#d8d8d8" opacity="0.36"/><g filter="url(#b4)"><polygon points="-4.1,64.5 0.0,63.5 6.2,59.3 12.4,55.2 18.5,57.3 24.7,53.2 30.9,50.1 37.1,47.0 42.2,49.4 49.4,55.2 57.7,57.3 65.9,55.2 74.2,58.3 82.4,57.3 90.6,59.3 100.9,57.3 109.2,55.2 115.4,53.2 121.5,50.1 127.7,48.0 133.9,49.4 140.1,54.2 146.3,55.2 154.5,52.1 162.8,51.1 171.0,56.2 179.2,59.3 189.5,63.9 189.5,86.1 -4.1,86.1" fill="#232121"/><polygon points="37.1,47.0 42.2,49.4 49.4,55.2 45.3,65.5 39.1,73.8 33.0,63.5" fill="#322e2e"/><polygon points="127.7,48.0 133.9,49.4 140.1,54.2 138.0,65.5 129.8,71.7 124.6,61.4" fill="#332f2f"/><polygon points="90.6,59.3 100.9,57.3 109.2,55.2 113.3,67.6 100.9,75.8 92.7,69.6" fill="#2c2929"/><polygon points="-4.1,86.1 -4.1,75.8 10.3,69.6 26.8,71.7 47.4,75.8 68.0,71.7 88.6,76.8 113.3,73.8 138.0,75.8 162.8,71.7 189.5,75.8 189.5,86.1" fill="#181717"/></g><rect x="43.7" y="16.9" width="9" height=".65" fill="#b5b5b5"/></svg><div class="abs" style="left:44px;top:35.100px;font-size:4.200px;line-height:4.480px;color:#f2f2f2;white-space:nowrap">Technology is nothing. What's<br>important is that you have a faith in<br>people, that they're basically good<br>and smart, and if you give them<br>tools, they'll do wonderful things<br>with them. It's not the tools that you<br>have faith in — tools are just tools.<br>They work, or they don't work. It's<br>people you have faith in or not.</div></div><!--/c4-->
      </div>
  <div class="bar"></div>
  <div class="right">
    <div class="cb"></div>
    <div class="t lbl" style="left:31.4px;top:24px">Z resetem</div>
    <div class="t lbl" style="left:94.2px;top:24px">Czas przejścia modułu (min):</div>
    <div class="inp"></div>
    <div class="btn1"><svg style="position:absolute;left:8.300px;top:9.700px" width="17" height="14" viewBox="0 0 17 14"><path d="M1 7C3 3.4 5.6 1.8 8.5 1.8S14 3.4 16 7c-2 3.6-4.600 5.200-7.500 5.200S3 10.600 1 7z" fill="none" stroke="#6c7787" stroke-width="1.100"/><circle cx="8.500" cy="7" r="2.300" fill="none" stroke="#6c7787" stroke-width="1.100"/></svg><span>Podgląd</span></div>
    <div class="btn2"><span>Zapisz</span></div>
    <div class="dots"></div>
    <svg class="plus" viewBox="0 0 15 15"><circle cx="7.500" cy="7.500" r="7.500" fill="#2f6ad9"/><path d="M7.500 4.300v6.400M4.300 7.500h6.400" stroke="#fff" stroke-width="1.300" stroke-linecap="round"/></svg>
    <div class="t p12" style="left:-3.5px;top:103.2px">wspólnego wyznaczania celów i budowania planów z mierzalnymi wynikami,</div>
    <div class="t p12" style="left:-3px;top:119.700px">e osoby i całe zespoły.</div>
    <!--ill--><svg class="abs" style="left:0;top:155px" width="60" height="200" viewBox="421 200 60 200"><polygon points="425.2,215.5 430.5,228.8 444.7,230.7 433.7,239.9 436.2,253.9 424.2,246.3 411.6,253.0 415.1,239.2 404.8,229.3 419.0,228.4" fill="none" stroke="#c53d33" stroke-width="1.500" stroke-linejoin="miter"/><polygon points="431.92,235.07 431.92,237.13 430.41,237.07 429.86,238.57 431.06,239.50 429.73,241.08 428.61,240.06 427.23,240.86 427.55,242.34 425.52,242.70 425.31,241.20 423.74,240.92 423.03,242.26 421.25,241.23 422.05,239.95 421.03,238.73 419.63,239.30 418.92,237.36 420.36,236.90 420.36,235.30 418.92,234.84 419.63,232.90 421.03,233.47 422.05,232.25 421.25,230.97 423.03,229.94 423.74,231.28 425.31,231.00 425.52,229.50 427.55,229.86 427.23,231.34 428.61,232.14 429.73,231.12 431.06,232.70 429.86,233.63 430.41,235.13" fill="#c53d33"/><circle cx="425.400" cy="236.100" r="2.700" fill="#d6d6d6"/><path d="M422.500 241.800l1.500 .8M427 243l2.500-.3" stroke="#2b3345" stroke-width="1"/><path d="M440 242.300q.8-2.300 3-3" stroke="#47a6b6" stroke-width="1" fill="none"/><path d="M422.500 252.800q1-1.300 2.500-1.600M426.500 251l1.600-.2" stroke="#47a6b6" stroke-width=".9" fill="none"/><path d="M439.7 216.29999999999998Q440.646 219.654 444.0 220.6Q440.646 221.546 439.7 224.9Q438.75399999999996 221.546 435.4 220.6Q438.75399999999996 219.654 439.7 216.29999999999998Z" fill="#dcae12"/><path d="M446.1 256.3Q446.93600000000004 259.264 449.90000000000003 260.1Q446.93600000000004 260.93600000000004 446.1 263.90000000000003Q445.264 260.93600000000004 442.3 260.1Q445.264 259.264 446.1 256.3Z" fill="#dcae12"/><path d="M456.4 263.2Q457.236 266.164 460.2 267Q457.236 267.836 456.4 270.8Q455.56399999999996 267.836 452.59999999999997 267Q455.56399999999996 266.164 456.4 263.2Z" fill="#dcae12"/><path d="M443.8 270.59999999999997Q444.636 273.56399999999996 447.6 274.4Q444.636 275.236 443.8 278.2Q442.964 275.236 440.0 274.4Q442.964 273.56399999999996 443.8 270.59999999999997Z" fill="#dcae12"/><circle cx="453.800" cy="282" r=".8" fill="#cf6a58"/><circle cx="451.200" cy="293.100" r="1.300" fill="#47a6b6"/><circle cx="446.300" cy="355" r="1.600" fill="#47a6b6"/><circle cx="403.300" cy="288" r="31.800" fill="#49a7b6"/><path d="M421 260.600A35.200 35.200 0 0 1 433.500 305.600" fill="none" stroke="#262f42" stroke-width="1.200"/><polygon points="421,320.600 422.600,320.900 439.200,343.300 421,343.300" fill="#49a7b6"/><path d="M423.100 321.600L439.200 343.500" stroke="#262f42" stroke-width="1.200"/><path d="M421 343.500H445.500" stroke="#262f42" stroke-width="1.200"/><path d="M446.500 343.500H453.200V334.500" stroke="#262f42" stroke-width="1" stroke-dasharray="1 1.600" fill="none"/><g fill="#d3a712"><circle cx="441" cy="314" r="6.500"/><circle cx="446" cy="308" r="6.500"/><circle cx="453.500" cy="306.500" r="6.500"/><circle cx="461" cy="308.500" r="6.500"/><circle cx="465.800" cy="314.500" r="6.300"/><circle cx="461" cy="318" r="6"/><circle cx="446" cy="318" r="6.500"/><rect x="442" y="310" width="22" height="12"/><path d="M458 320l9.500 6.500 .8-8z"/></g><path d="M450.800 320.500v-2.500c-3-1.600-4.500-4.500-4.200-7.200.3-1.300 1.300-1.800 2.400-1.800h8.600c1.100 0 2.100.5 2.400 1.800.3 2.700-1.200 5.600-4.200 7.200v2.500" fill="none" stroke="#ece6d2" stroke-width="1.200" stroke-linejoin="round"/><path d="M451.500 316l-1.800-4.500M455 316l1.800-4.500M453.300 316.500v-5" stroke="#ece6d2" stroke-width=".9" fill="none"/><circle cx="451" cy="310.800" r="1" fill="none" stroke="#ece6d2" stroke-width=".8"/><circle cx="455.600" cy="310.800" r="1" fill="none" stroke="#ece6d2" stroke-width=".8"/><rect x="449.400" y="320.600" width="8" height="9.600" rx="1.500" fill="#d9d9d9" stroke="#262f42" stroke-width="1"/><path d="M449.400 323.300h8M449.400 325.800h8M449.400 328.200h8" stroke="#262f42" stroke-width=".9"/><path d="M451.300 330.300h4.200l-1 2h-2.200z" fill="#262f42"/><path d="M440 323.500h7" stroke="#47a6b6" stroke-width="1" stroke-dasharray="1.600 1"/><g fill="none" stroke="#4ea4b3" stroke-width="1"><path d="M421 353.300H431.300V365.400H424.500L422 369V365.400H421"/><path d="M421.500 356.600H428.500M421.500 359.100H428.500M421.500 361.600H428.500"/><circle cx="428.600" cy="372.100" r="3.200"/><path d="M425 376.500H432.200A2.300 2.300 0 0 1 434.500 378.800V382.800H432.800V391.500H429.500V384M429.500 391.500H428V384M428 391.500H424.800V382.800H422.800V378.800A2.300 2.300 0 0 1 425 376.500Z"/></g></svg><!--/ill-->
    <div class="t h13" style="left:80.3px;top:167.500px">Jak działa OKR?</div>
    <div class="dot" style="left:80.600px;top:201.300px"></div>
    <div class="t p10" style="left:92.700px;top:196.500px">Cel to wskaźnik, który pracownik lub firma chce osiągnąć.</div>
    <div class="dot" style="left:80.600px;top:225.800px"></div>
    <div class="t p10" style="left:92.700px;top:221px;letter-spacing:.08px">KPI to pomiar i monitorowanie tego, w jaki sposób osiągamy cel.<br>Skuteczne KPI są konkretne i określone w czasie, ale realistyczne.</div>
    <div class="t p10" style="left:80.200px;top:286.800px">Ustal realistyczny cel i wyniki (które możesz zmierzyć, na przykład w<br>procentach lub liczbach).</div>
    <div class="t p10" style="left:80.200px;top:325px;letter-spacing:.07px">Skonfiguruj zadania w swoim menedżerze zadań lub jeszcze lepiej,<br>skorzystaj ze specjalnych systemów, które umożliwiają zarządzanie OKR.</div>
    <div class="tb"></div>
    <div class="tb2"></div>
    <div class="tl" style="left:0px;top:451.600px">Note</div>
    <div class="tl" style="left:73.300px;top:451.600px">Cytat</div>
    <div class="tl" style="left:147px;top:451.600px">Lista</div>
    <div class="tl" style="left:220px;top:451.600px">Obraz</div>
    <div class="tl" style="left:292.700px;top:451.600px;-webkit-mask-image:linear-gradient(to right,#000 72%,transparent 100%);mask-image:linear-gradient(to right,#000 72%,transparent 100%)">Multimedia</div>
    <div class="tl" style="left:377px;top:451.600px">Instrukcja</div>
    <div class="bb" style="left:-161.500px;top:516px"></div>
    <div class="bb" style="left:33.900px;top:516px"><span style="left:35.300px">Zestaw ćwiczeń</span></div>
    <div class="bb" style="left:229.300px;top:516px"><span style="left:35.300px">Wideo</span></div>
    <div class="bb" style="left:-161.500px;top:564.500px"></div>

    <svg class="abs" style="left:-6.500px;top:430px" width="13" height="12" viewBox="0 0 13 12"><rect x="0.800" y="0.800" width="11" height="10.400" rx="2.800" fill="none" stroke="#1a1a1a" stroke-width="1.500"/></svg>
    <svg class="abs" style="left:68.800px;top:432.300px" width="9" height="7" viewBox="0 0 9 7"><path d="M0.700 0.300h2.800v2.600c0 1.600-1 2.700-2.600 3.100l-0.300-0.900c0.900-0.300 1.400-0.800 1.500-1.600H0.700zM5 0.300h2.800v2.600c0 1.600-1 2.700-2.600 3.100l-0.300-0.900c0.900-0.300 1.400-0.800 1.500-1.600H5z" fill="#1a1a1a"/></svg>
    <svg class="abs" style="left:140px;top:431px" width="13" height="10" viewBox="0 0 13 10"><path d="M0.600 2.300L2.400 0.800V6.300" fill="none" stroke="#1a1a1a" stroke-width="1.300" stroke-linejoin="round"/><path d="M5 1.500h7.400M5 5h7.400M5 8.500h7.400" stroke="#1a1a1a" stroke-width="1.400"/></svg>
    <svg class="abs" style="left:212.800px;top:429.500px" width="13" height="13" viewBox="0 0 13 13"><rect x="1" y="1" width="11" height="11" rx="3" fill="none" stroke="#1a1a1a" stroke-width="1.500"/><path d="M1.500 8.800l2.800-2.600 2.200 2 1.500-1.300 3.500 3.200" fill="none" stroke="#1a1a1a" stroke-width="1.300" stroke-linejoin="round"/><path d="M7 4.800c1.200-1 2.800-1.200 4.500-0.500" fill="none" stroke="#1a1a1a" stroke-width="1.200"/><circle cx="8.800" cy="4.300" r="0.900" fill="#1a1a1a"/></svg>
    <svg class="abs" style="left:286px;top:429.500px" width="13" height="13" viewBox="0 0 13 13"><rect x="1" y="1" width="11" height="11" rx="3" fill="none" stroke="#1a1a1a" stroke-width="1.500"/><path d="M5.200 4.300v4.400l3.600-2.200z" fill="none" stroke="#1a1a1a" stroke-width="1.200" stroke-linejoin="round"/></svg>
    <svg class="abs" style="left:371px;top:431.800px" width="12" height="12" viewBox="0 0 12 12"><circle cx="6" cy="6" r="4.900" fill="none" stroke="#1a1a1a" stroke-width="1.200"/><path d="M6 5.400v3" stroke="#1a1a1a" stroke-width="1.300"/><circle cx="6" cy="3.700" r="0.800" fill="#1a1a1a"/></svg>
    <svg class="abs" style="left:46.800px;top:526.200px" width="15.600" height="15.600" viewBox="0 0 17 17"><g fill="#a9cdb4" stroke="#3f9e5f" stroke-width="1.100"><rect x="0.800" y="0.800" width="15.400" height="6.600" rx="2"/><rect x="0.800" y="9.600" width="15.400" height="6.600" rx="2"/></g><path d="M3.500 4.100h4M3.500 12.900h4" stroke="#3f9e5f" stroke-width="1.100"/></svg>
    <svg class="abs" style="left:242px;top:527.300px" width="15.600" height="12.900" viewBox="0 0 17 14"><rect x="0.700" y="1.200" width="10" height="11.600" rx="2" fill="#b9b0e0" stroke="#6f5bd6" stroke-width="1.200"/><path d="M11 6l4.800-2.600v7.200L11 8z" fill="none" stroke="#6f5bd6" stroke-width="1.200" stroke-linejoin="round"/></svg>
    <div class="fade"></div>
  </div>
</div>
</body>
</html>
